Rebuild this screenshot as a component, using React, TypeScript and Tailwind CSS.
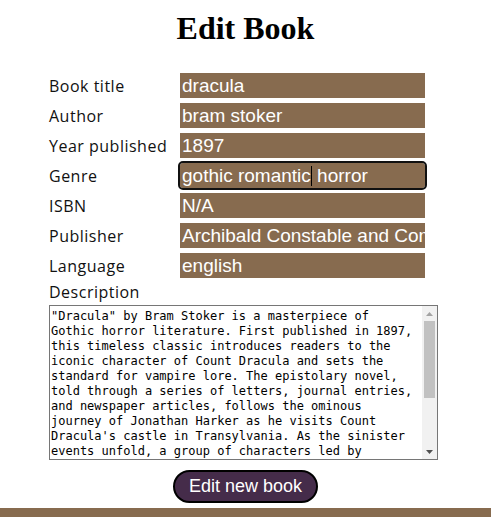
import React from "react";

const rows: [string, string][] = [
  ["Book title", "dracula"],
  ["Author", "bram stoker"],
  ["Year published", "1897"],
  ["Genre", "gothic romantic horror"],
  ["ISBN", "N/A"],
  ["Publisher", "Archibald Constable and Company"],
  ["Language", "english"],
];

const desc = `"Dracula" by Bram Stoker is a masterpiece of
Gothic horror literature. First published in 1897,
this timeless classic introduces readers to the
iconic character of Count Dracula and sets the
standard for vampire lore. The epistolary novel,
told through a series of letters, journal entries,
and newspaper articles, follows the ominous
journey of Jonathan Harker as he visits Count
Dracula's castle in Transylvania. As the sinister
events unfold, a group of characters led by
Professor Abraham Van Helsing band together to
confront the ancient evil.`;

export default function App() {
  return (
    <div className="w-[491px] h-[517px] bg-white flex flex-col overflow-hidden">
      <h1
        className="text-center text-[32px] font-bold text-black mt-[10px] leading-[37px]"
        style={{ fontFamily: '"Liberation Serif", serif' }}
      >
        Edit Book
      </h1>
      <div className="ml-[49px] mt-[26px] flex flex-col gap-[5px]">
        {rows.map(([label, value]) => (
          <div key={label} className="flex items-center h-[25px]">
            <span
              className="w-[131px] text-[16px] tracking-[0.5px] text-[#111]"
              style={{ fontFamily: '"Open Sans", sans-serif' }}
            >
              {label}
            </span>
            <div
              className={
                "w-[245px] h-[25px] bg-[#876b4f] text-white text-[19px] leading-[25px] pl-[2px] whitespace-nowrap overflow-hidden " +
                (label === "Genre" ? "outline-2 outline-[#111] rounded-[3px]" : "")
              }
              style={{ fontFamily: '"Liberation Sans", Arial, sans-serif' }}
            >
              {label === "Genre" ? (
                <>
                  gothic romantic<span className="inline-block w-px h-[20px] bg-black align-[-4px]" /> horror
                </>
              ) : (
                value
              )}
            </div>
          </div>
        ))}
      </div>
      <div
        className="ml-[49px] mt-[4px] text-[16px] tracking-[0.5px] text-[#111] leading-[20px]"
        style={{ fontFamily: '"Open Sans", sans-serif' }}
      >
        Description
      </div>
      <div className="ml-[49px] mt-[3px] w-[389px] h-[155px] border border-[#767676] flex">
        <div
          className="flex-1 overflow-hidden whitespace-pre text-[12px] leading-[15px] pl-[1px] pt-[3px] text-black"
          style={{ fontFamily: '"DejaVu Sans Mono", monospace' }}
        >
          {desc}
        </div>
        <div className="w-[15px] h-full bg-[#f1f1f1] flex flex-col items-center">
          <div className="h-[15px] flex items-center justify-center">
            <svg width="7" height="4" viewBox="0 0 7 4">
              <polygon points="0,4 7,4 3.5,0" fill="#a3a3a3" />
            </svg>
          </div>
          <div className="w-[11px] h-[77px] bg-[#c1c1c1]" />
          <div className="flex-1" />
          <div className="h-[15px] flex items-center justify-center">
            <svg width="7" height="4" viewBox="0 0 7 4">
              <polygon points="0,0 7,0 3.5,4" fill="#505050" />
            </svg>
          </div>
        </div>
      </div>
      <div className="flex justify-center mt-[10px]">
        <button
          className="h-[33px] px-[14px] rounded-full bg-[#452c4a] border-2 border-black text-white text-[18px]"
          style={{ fontFamily: '"Liberation Sans", Arial, sans-serif' }}
        >
          Edit new book
        </button>
      </div>
      <div className="mt-auto h-[9px] bg-[#876b4f]" />
    </div>
  );
}
